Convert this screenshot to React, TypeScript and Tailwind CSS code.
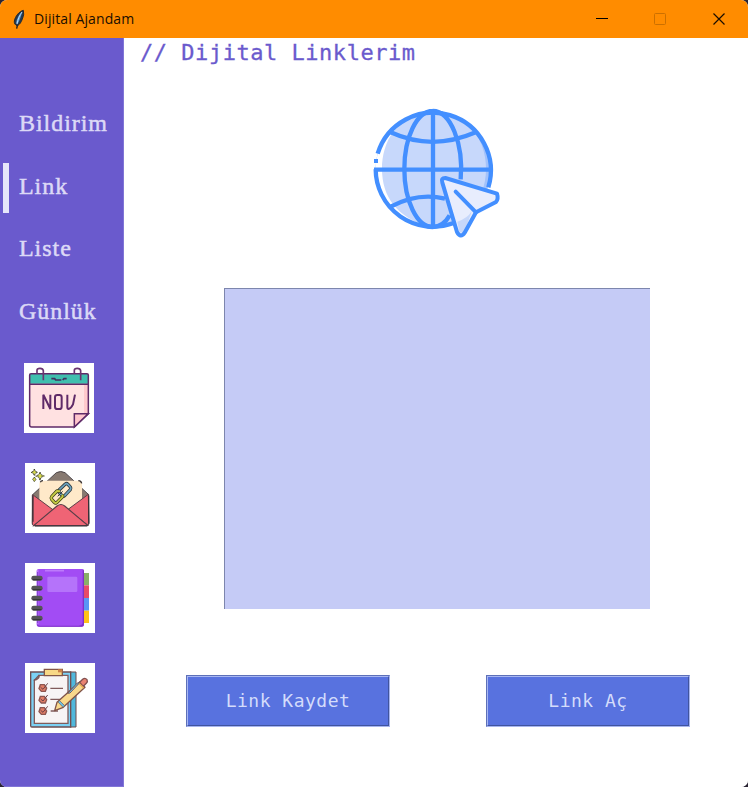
import React from "react";

function Feather() {
  return (
    <svg className="h-6 w-4" viewBox="36 15 48 72">
      <path d="M50 80 L54 62" stroke="#1c1c1c" strokeWidth="4" fill="none" />
      <path d="M70 25 C58 28 46 42 43 57 C42 64 46 70 52 71 C61 68 68 52 71 37Z" fill="#27384a" stroke="#222a33" strokeWidth="3" />
      <path d="M67 29 C58 36 50 48 48 64 L53 65 C59 56 63 42 67 29Z" fill="#4f93d2" />
      <path d="M66 30 C59 39 54 50 51 66" stroke="#b9dcf5" strokeWidth="3" fill="none" />
    </svg>
  );
}

function TitleBar() {
  return (
    <header className="flex h-[38px] shrink-0 items-center bg-[#ff8c00] pl-[12px]">
      <Feather />
      <h1 className="ml-[6px] font-['Open_Sans','Noto_Sans',sans-serif] text-[14px] leading-5 tracking-[0.1px] text-[#1a0e00]">
        Dijital Ajandam
      </h1>
      <div className="ml-auto flex items-center pr-[22px]">
        <svg className="h-[14px] w-[14px]" viewBox="0 0 14 14" shapeRendering="crispEdges">
          <path d="M1 6h12v1H1z" fill="#000" />
        </svg>
        <svg className="ml-[44px] h-[14px] w-[14px]" viewBox="0 0 14 14">
          <rect x="1.5" y="1.5" width="11" height="11" rx="1" fill="none" stroke="#cc7000" />
        </svg>
        <svg className="ml-[45px] h-[14px] w-[14px]" viewBox="0 0 14 14">
          <path d="M1.5 1.5 12.5 12.5M12.5 1.5 1.5 12.5" stroke="#1a0e00" strokeWidth="1.2" />
        </svg>
      </div>
    </header>
  );
}

function CalendarIcon() {
  return (
    <svg className="-ml-px h-[70px] w-[70px] bg-white" viewBox="27 24 210 210">
      <path d="M44 60q0-4 4-4h168q4 0 4 4v116l-42 40H50q-6 0-6-6z" fill="#ffe1e1" />
      <path d="M207 88h12v86h-12z" fill="#ffc9cd" />
      <path d="M45 57h174v29H45z" fill="#3fbfae" />
      <path d="M44 88h176M178 216H50q-6 0-6-6V60q0-4 4-4h168q4 0 4 4v116z" fill="none" stroke="#5f2a68" strokeWidth="4.5" />
      <path d="M178 216v-40h42z" fill="#ffc5cc" stroke="#5f2a68" strokeWidth="4.5" />
      <path d="M66 56V46q0-6 9-6t10 7v29M178 56V46q0-6 9-6t10 7v29" fill="none" stroke="#6a3470" strokeWidth="5" />
      <path d="M109 71h10l3 4h17M143 75l4-4h8" fill="none" stroke="#41305f" strokeWidth="5" />
      <path d="M85 162v-43l21 43v-43M120 127q0-7 7-7h6q7 0 7 7v28q0 7-7 7h-6q-7 0-7-7zM157 119v37q0 6 4 6 7-2 13-14l6-29" fill="none" stroke="#5f2a68" strokeWidth="6" />
    </svg>
  );
}

function EnvelopeIcon() {
  return (
    <svg className="h-[70px] w-[70px] bg-white" viewBox="30 24 210 210">
      <path d="M52 120 L124 53 Q137 46 150 53 L221 119 V208 H52Z" fill="#877970" stroke="#4c4548" strokeWidth="3" />
      <path d="M73 86q0-9 9-9h110q9 0 9 9v58l-64 40-64-46z" fill="#ffe9c9" />
      <path d="M76 82q2-5 8-5M190 77q8 0 10 8" fill="none" stroke="#342e30" strokeWidth="4" />
      <path d="M53 119l62 46-59 47q-4-2-4-8zM220 118l-62 46 60 46q4-2 4-8z" fill="#ef6475" stroke="#5a3f48" strokeWidth="3" />
      <path d="M56 212l70-59q12-9 23 0l69 58z" fill="#ef6475" stroke="#5a3f48" strokeWidth="3.5" />
      <path d="M54 122v78M60 213h157M221 122v84" fill="none" stroke="#363036" strokeWidth="3.5" />
      <g fill="none" strokeLinejoin="round">
        <path d="M133 104l18-17q4-3 8 1l7 8q3 4 0 8l-17 18q-4 3-8 0l-8-9q-4-4 0-9z" stroke="#303a40" strokeWidth="10" />
        <path d="M133 104l18-17q4-3 8 1l7 8q3 4 0 8l-17 18q-4 3-8 0l-8-9q-4-4 0-9z" stroke="#6ba3bf" strokeWidth="5" />
        <path d="M135 109l-9-1-16 17q-3 4 0 8l8 9q4 4 8 0l17-17-1-6" stroke="#34380f" strokeWidth="10" />
        <path d="M135 109l-9-1-16 17q-3 4 0 8l8 9q4 4 8 0l17-17-1-6" stroke="#c5cb45" strokeWidth="6" />
        <path d="M128 124l15-15" stroke="#303a40" strokeWidth="3" />
      </g>
      <path d="M58 42l3 7 7 3-7 3-3 7-3-7-7-3 7-3zM75 51l3 8 10 4-10 4-3 9-3-9-10-4 10-4zM58 66l5 7-5 7-5-7z" fill="#d5d94b" stroke="#2e3024" strokeWidth="2.5" strokeDasharray="6 2" />
    </svg>
  );
}

function NotebookIcon() {
  return (
    <svg className="h-[70px] w-[70px] bg-white" viewBox="30 24 210 210">
      <path d="M204 54h18v37h-18z" fill="#8aaf67" />
      <path d="M204 91h18v38h-18z" fill="#e74a68" />
      <path d="M204 129h18v38h-18z" fill="#5896f5" />
      <path d="M204 167h18v37h-18z" fill="#ffc217" />
      <rect x="65" y="42" width="142" height="173" rx="6" fill="#a24cf4" />
      <path d="M66 208q3 4 9 4h116q12 0 12-10V43q4 1 4 7v157q0 8-8 8H74q-8 0-8-7z" fill="#7f32c7" />
      <path d="M68 45v162M90 47h57" stroke="#bc7afa" strokeWidth="5" />
      <path d="M68 51v154" stroke="#7e3bd0" strokeWidth="3" />
      <rect x="97" y="65" width="90" height="46" rx="4" fill="#b573fa" />
      {[69, 99, 129, 159, 189].map((y) => (
        <g key={y}>
          <rect x="49" y={y - 7} width="34" height="15" rx="7" fill="#555" />
          <path d={`M54 ${y + 5}h25`} stroke="#333" strokeWidth="3" />
        </g>
      ))}
    </svg>
  );
}

function ChecklistIcon() {
  return (
    <svg className="h-[70px] w-[70px] bg-white" viewBox="30 24 210 210">
      <path d="M165 51h18v165h-18z" fill="#50b8dc" stroke="#714a4a" strokeWidth="3" />
      <path d="M47 51h120v165H51q-4 0-4-4z" fill="#7bd1f4" stroke="#6e4d50" strokeWidth="4" />
      <path d="M58 75q14-2 15-14h86v144H58z" fill="#f7f4f5" stroke="#805c5c" strokeWidth="4" />
      <path d="M57 77l16-17" stroke="#775353" strokeWidth="4" />
      <path d="M88 43h54v19H88z" fill="#f8d886" stroke="#825647" strokeWidth="4" />
      <path d="M129 43h13v9h-13z" fill="#cc8349" />
      {[99, 134, 168].map((y) => (
        <g key={y} transform={`translate(0 ${y})`}>
          <path d="M76-10h12l7 10-4 10H79l-7-8z" fill="#e07d66" stroke="#8d5650" strokeWidth="4" />
          <path d="M77-2l7 6 14-18" fill="none" stroke="#6b4045" strokeWidth="3" />
        </g>
      ))}
      <path d="M106 100h38M106 133h29M107 168h22" stroke="#805b5c" strokeWidth="4" />
      <path d="M126 142l68-61 16 16-67 61-24 9z" fill="#f8d88c" stroke="#805348" strokeWidth="4" strokeLinejoin="round" />
      <path d="M194 82l9-9q7-6 13 1 3 6-2 11l-9 9z" fill="#e98372" stroke="#805050" strokeWidth="4" />
      <path d="M158 115l29-31 8-2-30 32z" fill="#70c8ed" stroke="#73595b" strokeWidth="3" />
      <path d="M134 137l15 15-5 5-15-16z" fill="#69bfe4" stroke="#765b58" strokeWidth="2" />
      <path d="M193 86l13 13" stroke="#e6a94f" strokeWidth="4" />
    </svg>
  );
}

function GlobeIcon() {
  return (
    <svg className="h-[145px] w-[150px]" viewBox="0 0 450 435">
      <defs>
        <clipPath id="sphere">
          <circle cx="220" cy="207" r="173" />
        </clipPath>
      </defs>
      <g clipPath="url(#sphere)">
        <path d="M40 30H400V390H40Z" fill="#a2c2fb" />
        <ellipse cx="203" cy="207" rx="175" ry="190" fill="#c7d8fb" />
        <path d="M0 0H205V33C110 48 66 126 66 207C66 290 110 350 205 381V435H0Z" fill="#fff" />
      </g>
      <g fill="none" stroke="#438fff" strokeWidth="13">
        <path d="M53 161A173 173 0 1 1 385 262M47 208A173 173 0 0 0 279 370" />
        <path d="M42 209H397M219 30V384" />
        <path d="M218 33A85 174 0 0 0 218 381M218 33A85 174 0 0 1 302 238M218 381Q250 380 269 346" />
        <path d="M92 97Q216 154 347 97M92 320Q174 276 255 296" />
      </g>
      <path d="M42 177h12v12H42z" fill="#438fff" />
      <path d="M256 234Q242 234 247 248L291 396Q302 416 314 398L348 337L408 306Q416 297 411 281Z" fill="#e8edfd" />
      <path d="M292 365Q322 356 335 334L315 394Q304 404 297 392Z" fill="#c6d7fa" />
      <path d="M256 234Q242 234 247 248L291 396Q302 416 314 398L348 337L408 306Q416 297 411 281Z" fill="none" stroke="#438fff" strokeWidth="12" strokeLinejoin="round" />
      <path d="M287 275L348 337" fill="none" stroke="#438fff" strokeWidth="12" strokeLinecap="round" />
    </svg>
  );
}

function NavItem({ label, active = false }: { label: string; active?: boolean }) {
  return (
    <button className="flex h-[62.5px] w-full items-center pl-[3px] text-left">
      <span className={active ? "h-[50px] w-[6px] bg-[#e6e6fa]" : "h-[50px] w-[6px]"} />
      <span className="ml-[10px] pb-[4px] font-['Liberation_Serif',serif] text-[24px] leading-[46px] tracking-[0.95px] text-[#dcd9f6] [-webkit-text-stroke:0.5px_#dcd9f6]">
        {label}
      </span>
    </button>
  );
}

function Sidebar() {
  return (
    <aside className="flex w-[124px] shrink-0 flex-col border-r border-b border-[#8176d6] bg-[#6a5acd] pt-[56px]">
      <nav className="flex flex-col">
        <NavItem label="Bildirim" />
        <NavItem label="Link" active />
        <NavItem label="Liste" />
        <NavItem label="Günlük" />
      </nav>
      <div className="mt-[19px] flex flex-col gap-[30px] pl-[25px]">
        <CalendarIcon />
        <EnvelopeIcon />
        <NotebookIcon />
        <ChecklistIcon />
      </div>
    </aside>
  );
}

function ActionButton({ label }: { label: string }) {
  return (
    <button className="h-[52px] w-[204px] border border-t-[#5d70b8] border-r-[#a7b5ef] border-b-[#a7b5ef] border-l-[#5d70b8] bg-[#5872df]">
      <span className="flex h-full items-center justify-center border border-t-[#a8b7f2] border-r-[#40549f] border-b-[#40549f] border-l-[#a8b7f2] pb-[2px] font-['DejaVu_Sans_Mono',monospace] text-[18px] tracking-[0.5px] text-[#d4dcfb]">
        {label}
      </span>
    </button>
  );
}

export default function App() {
  return (
    <div className="h-[787px] w-[748px] bg-[#2a2433]">
      <div className="flex h-full flex-col overflow-hidden rounded-[7px] bg-white">
        <TitleBar />
        <div className="flex min-h-0 flex-1">
          <Sidebar />
          <main className="flex flex-1 flex-col bg-white">
            <h2 className="ml-[16px] h-[30px] font-['DejaVu_Sans_Mono',monospace] text-[22px] leading-[30px] tracking-[0.53px] text-[#6a5acd] [-webkit-text-stroke:0.3px_#6a5acd]">
              // Dijital Linklerim
            </h2>
            <div className="mt-[32px] ml-[236px] h-[145px]">
              <GlobeIcon />
            </div>
            <textarea
              aria-label="Link"
              className="mt-[43px] ml-[100px] block h-[321px] w-[426px] resize-none border-t border-l border-[#7d86ad] bg-[#c5cbf6] outline-none"
            />
            <div className="mt-[66px] ml-[62px] flex gap-[96px]">
              <ActionButton label="Link Kaydet" />
              <ActionButton label="Link Aç" />
            </div>
          </main>
        </div>
      </div>
    </div>
  );
}
